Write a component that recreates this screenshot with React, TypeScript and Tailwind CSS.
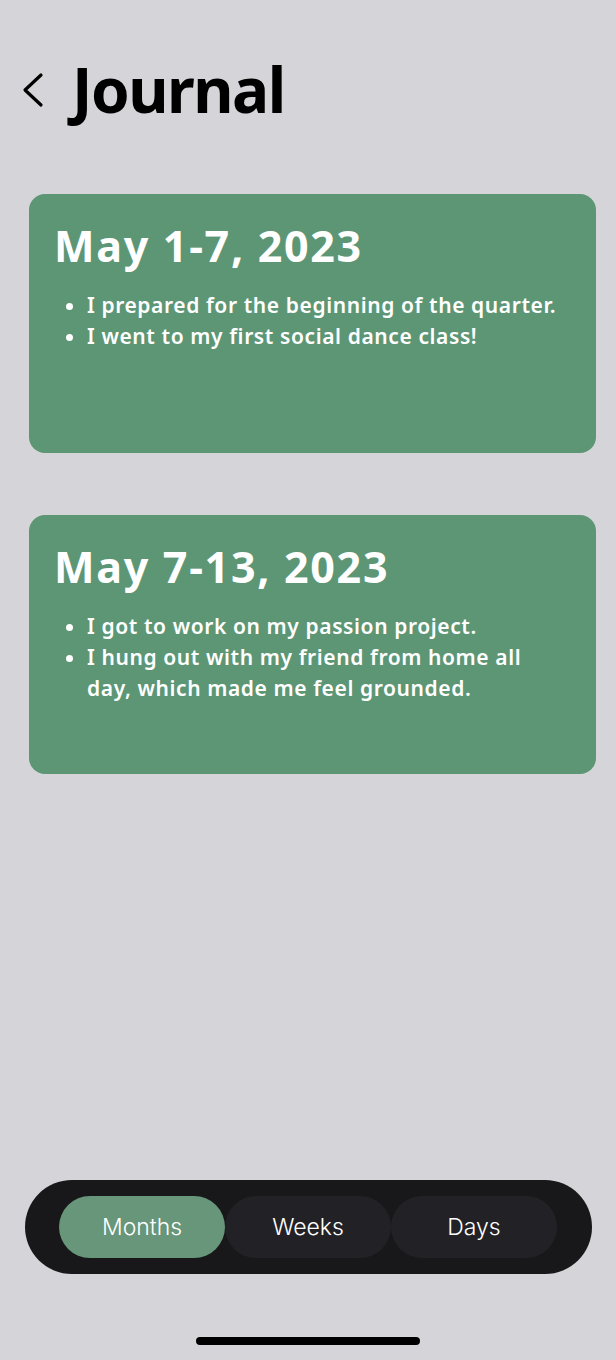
import React from "react";

const entries = [
  {
    title: "May 1-7, 2023",
    items: [
      ["I prepared for the beginning of the quarter."],
      ["I went to my first social dance class!"],
    ],
  },
  {
    title: "May 7-13, 2023",
    items: [
      ["I got to work on my passion project."],
      ["I hung out with my friend from home all", "day, which made me feel grounded."],
    ],
  },
];

export default function App() {
  return (
    <div
      className="w-[616px] h-[1360px] bg-[#d5d4d9] flex flex-col overflow-hidden"
      style={{ fontFamily: "'Noto Sans', Lato, sans-serif" }}
    >
      <div className="flex items-center pt-[50px] pl-[22px] h-[128px]">
        <svg width="22" height="36" viewBox="0 0 22 36" className="mr-[28px] mt-[2px]">
          <polyline
            points="19,3 3,18 19,33"
            fill="none"
            stroke="#000"
            strokeWidth="3.2"
            strokeLinecap="round"
            strokeLinejoin="round"
          />
        </svg>
        <h1 className="text-[62px] font-bold leading-none text-black tracking-[-1.5px]">
          Journal
        </h1>
      </div>

      <div className="flex flex-col gap-[62px] px-[29px] pt-[66px] pr-[20px]">
        {entries.map((e) => (
          <div
            key={e.title}
            className="h-[259px] rounded-[16px] bg-[#5c9675] pl-[25px] pr-[20px] pt-[26px] text-white"
          >
            <h2 className="text-[43px] font-bold leading-[52px] tracking-[1.7px]">
              {e.title}
            </h2>
            <ul className="mt-[18px] pl-[33px] list-disc text-[21px] font-semibold leading-[31px] tracking-[0.6px]">
              {e.items.map((it) => (
                <li key={it[0]} className="whitespace-nowrap">
                  {it.map((line, i) => (
                    <React.Fragment key={line}>
                      {i > 0 && <br />}
                      {line}
                    </React.Fragment>
                  ))}
                </li>
              ))}
            </ul>
          </div>
        ))}
      </div>

      <div className="flex-1" />

      <div className="mx-[25px] mr-[24px] h-[94px] rounded-full bg-[#18181a] flex items-center px-[34px]">
        <div
          className="flex w-full"
          style={{ fontFamily: "Inter, Roboto, sans-serif" }}
        >
          <button className="w-[166px] h-[62px] rounded-full bg-[#67967a] text-white text-[23px] font-light">
            Months
          </button>
          <button className="w-[166px] h-[62px] rounded-full bg-[#222226] text-white text-[23px] font-light">
            Weeks
          </button>
          <button className="w-[166px] h-[62px] rounded-full bg-[#222226] text-white text-[23px] font-light">
            Days
          </button>
        </div>
      </div>

      <div className="flex justify-center mt-[63px] mb-[15px]">
        <div className="w-[224px] h-[8px] rounded-full bg-black" />
      </div>
    </div>
  );
}
